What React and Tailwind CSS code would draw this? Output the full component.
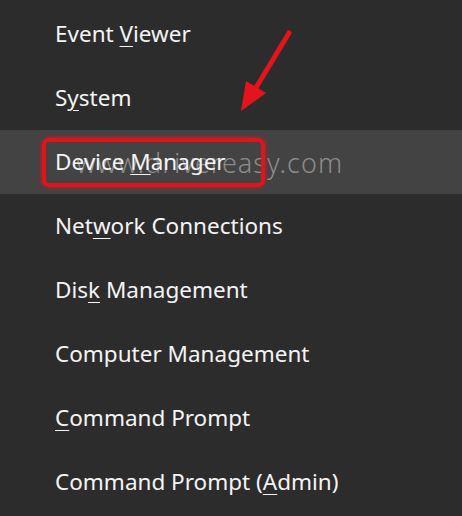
import React from 'react'

const items = [
  { pre: 'Event ', key: 'V', post: 'iewer' },
  { pre: 'S', key: 'y', post: 'stem' },
  { pre: 'Device ', key: 'M', post: 'anager', active: true },
  { pre: 'Net', key: 'w', post: 'ork Connections' },
  { pre: 'Dis', key: 'k', post: ' Management' },
  { pre: 'Computer Management', key: '', post: '' },
  { pre: '', key: 'C', post: 'ommand Prompt' },
  { pre: 'Command Prompt (', key: 'A', post: 'dmin)' },
]

function Arrow() {
  return (
    <svg className="absolute left-0 top-0" width="462" height="130" viewBox="0 0 462 130">
      <line x1="289" y1="33" x2="254" y2="91" stroke="#e3141b" strokeWidth="5" strokeLinecap="round" />
      <polygon points="241,111 246,81 266,93" fill="#e3141b" />
    </svg>
  )
}

export default function App() {
  return (
    <div
      className="relative w-[462px] h-[516px] overflow-hidden bg-[#2d2c2c] text-[#f4f4f4]"
      style={{ fontFamily: '"Noto Sans", "Open Sans", sans-serif' }}
    >
      <div className="flex flex-col pt-[2px]">
        {items.map((it, i) => (
          <div
            key={i}
            className={`relative h-[64px] flex items-center pl-[55px] text-[22.5px] ${it.active ? 'bg-[#434343]' : ''}`}
          >
            {it.active && (
              <>
                <span className="absolute left-[76px] top-[13px] text-[27px] font-light tracking-[1px] text-[#a0a0a0]/80">
                  www.drivereasy.com
                </span>
                <span className="absolute left-[42px] top-[8px] w-[223px] h-[49px] rounded-[7px] border-[4px] border-[#e1141c] shadow-[0_0_4px_#e1141c]" />
              </>
            )}
            <span className="relative">
              {it.pre}
              {it.key && <span className="underline underline-offset-[4px] decoration-1">{it.key}</span>}
              {it.post}
            </span>
          </div>
        ))}
      </div>
      <Arrow />
    </div>
  )
}
